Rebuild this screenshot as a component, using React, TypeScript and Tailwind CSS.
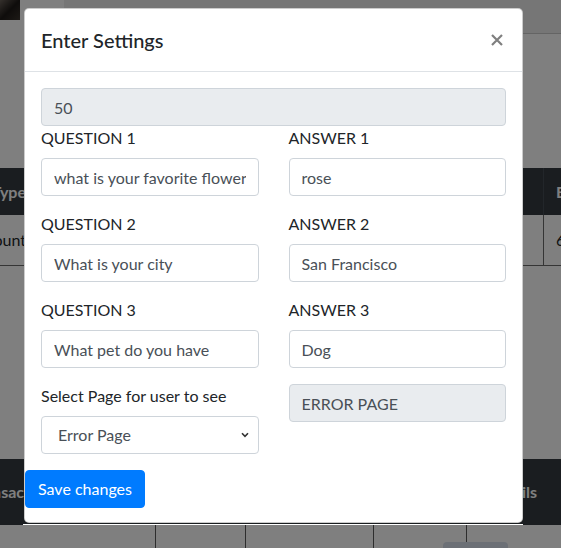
import React from "react";

const rows = [
  { q: "QUESTION 1", qv: "what is your favorite flower", a: "ANSWER 1", av: "rose" },
  { q: "QUESTION 2", qv: "What is your city", a: "ANSWER 2", av: "San Francisco" },
  { q: "QUESTION 3", qv: "What pet do you have", a: "ANSWER 3", av: "Dog" },
];

const inputBase =
  "block h-[38px] w-full rounded-[4px] border border-[#ced4da] px-3 text-[16px] leading-6 text-[#495057] outline-none";

function Field({ label, value }: { label: string; value: string }) {
  return (
    <div className="mb-4">
      <label className="mb-2 block leading-6">{label}</label>
      <input className={`${inputBase} bg-white`} defaultValue={value} />
    </div>
  );
}

export default function App() {
  return (
    <div className="relative h-[548px] w-[561px] overflow-hidden bg-white font-['Lato',sans-serif] text-[16px] leading-6 text-[#212529]">
      {/* page behind the modal */}
      <div className="flex h-[34px]">
        <div className="h-[20px] w-[20px] bg-gradient-to-br from-[#6b625a] via-[#1e1a17] to-[#3b342e]" />
        <div className="w-[44px]" />
        <div className="flex-1 border-b border-[#c8c8c8] bg-[#ececec]" />
      </div>
      <div className="h-[134px]" />

      <div className="border-b border-[#6a6a6a]">
        <div className="flex h-[47px] items-center bg-[#343a40] font-bold text-white">
          <div className="flex w-[26px] justify-end overflow-hidden whitespace-nowrap">Type</div>
          <div className="flex-1" />
          <div className="flex h-full w-[18px] items-center border-l border-[#454d55] pl-3">E</div>
        </div>
        <div className="flex h-[50px] items-center">
          <div className="flex w-[26px] justify-end overflow-hidden whitespace-nowrap">Account</div>
          <div className="flex-1" />
          <div className="flex h-full w-[18px] items-center border-l border-[#6a6a6a] pl-3">6</div>
        </div>
      </div>

      <div className="h-[193px]" />

      <div className="flex h-[66px] items-center bg-[#343a40] font-bold text-white">
        <div className="flex w-[24px] justify-end overflow-hidden whitespace-nowrap">Transac</div>
        <div className="flex-1" />
        <div className="pr-[24px]">Details</div>
      </div>
      <div className="flex h-[30px]">
        <div className="w-[156px] border-r border-[#5a5a5a]" />
        <div className="w-[90px] border-r border-[#5a5a5a]" />
        <div className="w-[128px] border-r border-[#5a5a5a]" />
        <div className="w-[93px] border-r border-[#5a5a5a]" />
        <div className="flex-1">
          <div className="ml-[-24px] mt-[17px] h-[20px] w-[65px] rounded-[4px] bg-[#d8e0ec]" />
        </div>
      </div>

      {/* backdrop */}
      <div className="absolute inset-0 bg-black/50" />

      {/* modal */}
      <div className="absolute left-[24px] top-[8px] w-[499px] rounded-[5px] border border-black/20 bg-white">
        <div className="flex items-center justify-between border-b border-[#dee2e6] p-4">
          <h5 className="text-[20px] font-medium leading-[30px]">Enter Settings</h5>
          <button className="mr-[3px] flex h-[30px] items-center" aria-label="Close">
            <svg width="12" height="12" viewBox="0 0 12 12">
              <path d="M1 1 11 11M11 1 1 11" stroke="#000" strokeOpacity="0.5" strokeWidth="2.2" />
            </svg>
          </button>
        </div>
        <div className="px-4 pt-4">
          <input className={`${inputBase} bg-[#e9ecef]`} defaultValue="50" disabled />
          <div className="grid grid-cols-2 gap-x-[30px]">
            <div>
              {rows.map((r) => (
                <Field key={r.q} label={r.q} value={r.qv} />
              ))}
              <div className="mb-4">
                <label className="mb-2 block leading-6">Select Page for user to see</label>
                <div className="relative">
                  <select
                    className="block h-[38px] w-full appearance-none rounded-[4px] border border-[#ced4da] bg-white pl-4 text-[16px] text-[#495057] outline-none"
                    defaultValue="error"
                  >
                    <option value="error">Error Page</option>
                    <option value="home">Home Page</option>
                  </select>
                  <svg
                    className="pointer-events-none absolute right-[10px] top-[16px]"
                    width="8"
                    height="6"
                    viewBox="0 0 8 6"
                    fill="none"
                  >
                    <path d="M1 1.2 4 4.4 7 1.2" stroke="#333" strokeWidth="1.6" />
                  </svg>
                </div>
              </div>
            </div>
            <div>
              {rows.map((r) => (
                <Field key={r.a} label={r.a} value={r.av} />
              ))}
              <input className={`${inputBase} bg-[#e9ecef]`} defaultValue="ERROR PAGE" disabled />
            </div>
          </div>
        </div>
        <div className="pb-[14px]">
          <button className="h-[38px] rounded-[4px] border border-[#007bff] bg-[#007bff] px-3 text-[16px] leading-6 text-white">
            Save changes
          </button>
        </div>
      </div>
      <div className="absolute left-[23px] top-[524px] h-px w-[500px] bg-white" />
    </div>
  );
}
